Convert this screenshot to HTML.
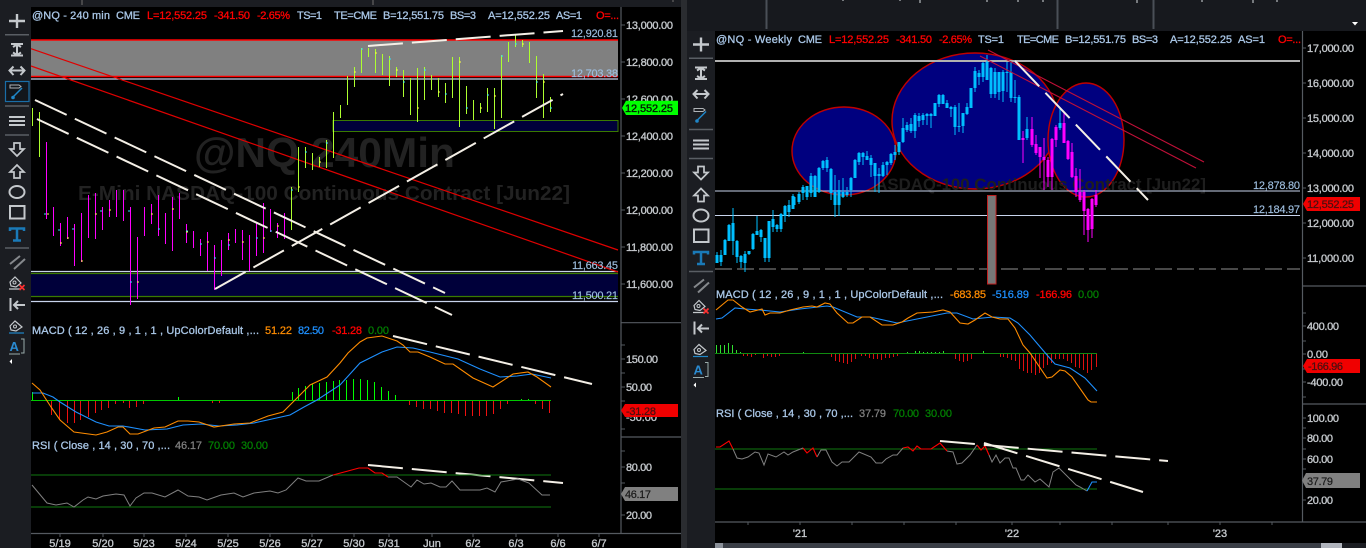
<!DOCTYPE html>
<html><head><meta charset="utf-8"><title>Charts</title>
<style>
html,body{margin:0;padding:0;background:#000;width:1366px;height:548px;overflow:hidden}
svg{display:block;position:absolute;left:0;top:0}
text{font-family:"Liberation Sans",sans-serif;font-size:11px;white-space:pre}
.h{fill:#a9c6e6;stroke:#a9c6e6;stroke-width:.3}
.r{fill:#ff0000;stroke:#ff0000;stroke-width:.3}
.o{fill:#ff8c00;stroke:#ff8c00;stroke-width:.25}.b{fill:#1e90ff;stroke:#1e90ff;stroke-width:.25}.g{fill:#008000;stroke:#008000;stroke-width:.25}.y{fill:#808080;stroke:#808080;stroke-width:.25}
.a{fill:#c4c8cc;stroke:#c4c8cc;stroke-width:.35}
.l{fill:#9fbfe0;stroke:#9fbfe0;stroke-width:.15}
.t{fill:#4a1010;stroke:#4a1010;stroke-width:.25}
.w{fill:none;stroke:#f4efe6;stroke-width:2;stroke-dasharray:35 9}
.i{fill:none;stroke:#c4c8cc;stroke-width:2}
.c{shape-rendering:crispEdges}
</style></head><body>
<svg width="1366" height="548" viewBox="0 0 1366 548" xmlns="http://www.w3.org/2000/svg">
<defs>
<g id="tb">
<path class="i" style="stroke-width:2.4" d="M17 14V28M9 21H25"/>
<path d="M5 34.7H29M5 106H29M5 135H29M5 248H29" stroke="#5a5e64" stroke-width="1.5" fill="none"/>
<path class="i" d="M11 44H23M11 55.5H23M17 44V55.5M13 47L17 44.5L21 47M13 52.5L17 55L21 52.5"/>
<path class="i" d="M10 70.5H24M13.5 66.5L9.5 70.5L13.5 75M20.5 66.5L24.5 70.5L20.5 75"/>
<path d="M10 85H19L21 86.5L19 88H10Z" fill="none" stroke="#b0b4b8"/>
<path d="M13 97L22 88" stroke="#1f86c8" stroke-width="1.5"/><circle cx="13" cy="97.5" r="1.8" fill="#1f86c8"/>
<path class="i" style="stroke-width:2" d="M9 117H25M9 121H25M9 125H25"/>
<path class="i" style="stroke-width:1.7" d="M14 143H20V149H24L17 156L10 149H14Z"/>
<path class="i" style="stroke-width:1.7" d="M17 165L24 172H20V178H14V172H10Z"/>
<ellipse class="i" style="stroke-width:2" cx="17" cy="192" rx="7.5" ry="6"/>
<rect class="i" style="stroke-width:2" x="10" y="206" width="14.5" height="12.5"/>
<path d="M10 231V228.5H24V231M17 228.5V240M13 240.5H21" fill="none" stroke="#1a7ab8" stroke-width="2.5"/>
<path d="M10 264L20 256M14 269L25 259" fill="none" stroke="#85888c" stroke-width="2"/>
<path class="i" style="stroke-width:1.2" d="M11 286L10 282L15 277L21 283L16 287ZM9 289H20"/>
<circle cx="14.5" cy="282.5" r="1.5" fill="none" stroke="#c4c8cc"/>
<path d="M19.5 285L24.5 290M24.5 285L19.5 290" stroke="#ff3030" stroke-width="1.6"/>
<path class="i" d="M10.5 298V311M14 305H25M18 301L14 305L18 309"/>
<path class="i" style="stroke-width:1.2" d="M11 330L10 326L15 321L22 327L16 331Z"/>
<circle cx="15" cy="326.5" r="1.5" fill="none" stroke="#c4c8cc"/>
<path d="M9 333H24" stroke="#1f86c8" stroke-width="1.2"/>
<text x="9.5" y="351" style="font-size:13px;font-weight:bold;fill:#2a8ad0">A</text>
<path d="M21 339H24V353H21M9 354H20" fill="none" stroke="#9aa" stroke-width="1"/>
<path d="M9.5 361.5L12 359V364Z" fill="#fff"/>
</g>
</defs>

<!-- chrome -->
<rect width="1366" height="548" fill="#000"/>
<rect x="0" y="0" width="31" height="548" fill="#1b1d22"/>
<rect x="0" y="0" width="690" height="7" fill="#1b1d22"/>
<rect x="681" y="0" width="6" height="548" fill="#2a2c30"/>
<rect x="687" y="0" width="28" height="548" fill="#1b1d22"/>
<rect x="687" y="0" width="679" height="31" fill="#17191e"/>
<path d="M82 0V5M373 0V5M673 0V2" stroke="#555" stroke-width="1.5"/>
<path d="M766.5 0V29M1057.5 0V29M1153.5 0V29" stroke="#4a4f57" stroke-width="2"/>
<path d="M843 0V1M900 0V1M920 0V3M987 0V2M1018 0V2M1043 0V2M1137 0V3M1202 0V2M1253 0V3M1277 0V2" stroke="#a0a4a8" stroke-width="1.4"/>
<path d="M1352 22H1358L1355 25.5Z" fill="#fff"/>

<!-- LEFT CHART -->
<text x="194" y="167" textLength="261" lengthAdjust="spacingAndGlyphs" style="font-size:42px;font-weight:bold;fill:#222">@NQ 240Min</text>
<text x="78" y="200" textLength="492" lengthAdjust="spacingAndGlyphs" style="font-size:20px;font-weight:bold;fill:#222">E-Mini NASDAQ-100 Continuous Contract [Jun22]</text>
<rect x="31" y="40" width="587" height="36.5" fill="#808080"/>
<rect x="333" y="120.5" width="285" height="11" fill="#00003a" stroke="#3a7a00"/>
<rect x="31" y="273.5" width="587" height="23" fill="#00003a"/>
<path d="M31 273.5H618M31 296.5H618" stroke="#3a7a00" stroke-width="1.3"/>
<path d="M31 40H618M31 76.5H618" stroke="#ff0000" stroke-width="1.6"/>
<path d="M31 79H618M31 271.5H618M31 301.5H618" stroke="#c8d4ec" stroke-width="1.2"/>
<path d="M31 48.7L618 250M31 66L618 272" stroke="#e00000" stroke-width="1.2" fill="none"/>

<path class="c" fill="none" stroke="#adff2f" stroke-width="1" d="M32.5 108V126M39.5 112V157M291.5 187V230M298.5 147V192M305.5 147V168M312.5 153V170M319.5 157V167M326.5 140V168M333.5 112V158M340.5 105V118M347.5 76V105M354.5 67V87M361.5 48V73M368.5 48V57M375.5 49V73M382.5 54V75M389.5 56V86M396.5 67V77M403.5 70V97M410.5 78V115M417.5 68V122M424.5 67V100M431.5 75V90M438.5 78V97M445.5 83V103M452.5 57V98M459.5 57V127M466.5 86V114M473.5 100V120M480.5 103V113M487.5 88V112M494.5 88V129M501.5 55V118M508.5 42V62M515.5 34V47M522.5 40V47M529.5 42V63M536.5 56V98M543.5 74V118M550.5 97V112"/>
<path class="c" fill="none" stroke="#ff00ff" stroke-width="1" d="M46.5 142V219M53.5 207V236M60.5 223V246M67.5 217V239M74.5 224V266M81.5 213V262M88.5 195V238M95.5 193V239M102.5 207V230M109.5 200V217M116.5 190V217M123.5 190V221M130.5 207V305M137.5 237V299M144.5 207V236M151.5 204V224M158.5 195V236M165.5 213V244M172.5 197V251M179.5 193V219M186.5 224V243M193.5 231V248M200.5 239V256M207.5 232V271M214.5 245V290M221.5 240V276M228.5 233V250M235.5 229V243M242.5 230V260M249.5 235V271M256.5 223V256M263.5 203V253M270.5 209V232M277.5 223V238M284.5 213V239"/>
<path class="c" fill="none" stroke="#ffff40" stroke-width="1" d="M47 214h2M60 243h2M67 238h2M81 261h2M95 214h2M109 210h2M137 282h2M151 214h2M172 209h2M186 232h2M207 242h2M228 240h2M242 242h2M263 238h2M277 226h2M298 187h2M319 162h2M354 72h2M375 53h2M396 70h2M417 108h2M438 92h2M459 62h2M480 108h2M494 96h2M522 44h2M543 82h2"/>
<path class="c" fill="none" stroke="#30e0ff" stroke-width="1" d="M44 214h2M58 230h2M72 229h2M100 211h2M128 211h2M130 282h2M158 229h2M186 231h2M200 244h2M214 258h2M228 245h2M256 238h2M270 231h2M291 190h2M305 152h2M326 143h2M361 49h2M389 59h2M403 82h2M424 70h2M445 94h2M466 108h2M487 95h2M501 56h2M515 44h2M536 82h2M550 108h2"/>

<path class="w" d="M35 100L445 293"/>
<path class="w" d="M37 119L452 315"/>
<path class="w" d="M215 289L563 94"/>
<path class="w" d="M368 46L563 31"/>
<path class="w" d="M393 336L592 384"/>
<path class="w" d="M368 465L563 483"/>

<text x="32" y="19" class="h" textLength="78">@NQ - 240 min</text>
<text x="116" y="19" class="h" textLength="24">CME</text>
<text x="147" y="19" class="r" textLength="60">L=12,552.25</text>
<text x="214" y="19" class="r" textLength="36">-341.50</text>
<text x="257" y="19" class="r" textLength="33">-2.65%</text>
<text x="297" y="19" class="h" textLength="25">TS=1</text>
<text x="334" y="19" class="h" textLength="43">TE=CME</text>
<text x="383" y="19" class="h" textLength="61">B=12,551.75</text>
<text x="450" y="19" class="h" textLength="26">BS=3</text>
<text x="488" y="19" class="h" textLength="62">A=12,552.25</text>
<text x="556" y="19" class="h" textLength="26">AS=1</text>
<text x="596" y="19" class="r" textLength="23">O=...</text>
<text x="571" y="37" class="l" textLength="47">12,920.81</text>
<text x="571" y="77" class="l" textLength="47">12,703.38</text>
<text x="572" y="269" class="l" textLength="46">11,663.45</text>
<text x="572" y="299" class="l" textLength="46">11,500.21</text>

<!-- left MACD -->
<text x="32" y="334" class="h" textLength="227">MACD ( 12 , 26 , 9 , 1 , 1 , UpColorDefault ,...</text>
<text x="265" y="334" class="o" textLength="27">51.22</text>
<text x="298" y="334" class="b" textLength="26">82.50</text>
<text x="332" y="334" class="r" textLength="30">-31.28</text>
<text x="368" y="334" class="g" textLength="21">0.00</text>
<path class="c" fill="none" stroke="#00ff00" stroke-width="1" d="M32.5 392V401M178.5 397V401M292.5 392V401M298.5 388V401M305.5 386V401M312.5 384V401M319.5 383V401M326.5 382V401M333.5 381V401M339.5 380V401M346.5 380V401M353.5 379V401M360.5 379V401M367.5 380V401M374.5 382V401M381.5 387V401M388.5 391V401M395.5 395V401M521.5 399V401M528.5 399V401"/>
<path class="c" fill="none" stroke="#f01010" stroke-width="1" d="M51.5 401V415M59.5 401V420M67.5 401V423M74.5 401V423M80.5 401V420M88.5 401V417M95.5 401V413M101.5 401V410M108.5 401V408M115.5 401V404M123.5 401V403M129.5 401V408M136.5 401V407M143.5 401V404M212.5 401V403M219.5 401V403M409.5 401V405M416.5 401V407M423.5 401V409M430.5 401V409M437.5 401V411M444.5 401V413M451.5 401V413M458.5 401V414M465.5 401V416M472.5 401V416M479.5 401V416M486.5 401V416M493.5 401V414M500.5 401V409M507.5 401V404M535.5 401V404M542.5 401V409M549.5 401V413"/>
<path class="c" d="M31 400.5H551" stroke="#00c800" stroke-width="1"/>
<path fill="none" stroke="#1e90ff" stroke-width="1.1" d="M32 393L43 393L53 397L60 402L76 412L96 422L109 426L123 426L145 430L167 429L183 425L201 424L219 426L237 425L254 423L272 419L290 415L304 407L317 400L340 385L360 363L382 352L397 347L413 348L430 352L458 359L480 369L500 377L517 376L532 374L551 378"/>
<path fill="none" stroke="#ff8c00" stroke-width="1.1" d="M32 383L40 390L51 407L60 420L74 432L96 435L107 432L118 427L123 427L130 434L138 434L154 428L165 427L178 421L188 421L199 422L214 427L234 424L250 423L268 416L283 412L290 405L295 400L310 385L327 377L340 363L348 353L360 342L367 338L382 336L397 341L403 345L410 352L418 352L430 357L445 364L453 364L473 378L493 387L513 374L528 372L537 377L551 387"/>

<!-- left RSI -->
<text x="32" y="449" class="h" textLength="138">RSI ( Close , 14 , 30 , 70 ,...</text>
<text x="175" y="449" class="y" textLength="27">46.17</text>
<text x="208" y="449" class="g" textLength="27">70.00</text>
<text x="241" y="449" class="g" textLength="27">30.00</text>
<path d="M31 475H551M31 507H551" stroke="#117711" stroke-width="1.1"/>
<path fill="none" stroke="#808080" d="M32 485L47 503L56 505L67 503L74 507L83 500L88 497L96 499L103 496L116 494L124 495L130 506L136 498L144 493L152 493L165 497L178 490L188 496L199 497L207 500L221 495L234 493L243 497L254 493L270 491L278 493L286 490L298 478L306 481L319 481L333 475M388 477L397 477L411 487L417 480L424 484L431 483L440 487L446 487L452 481L460 490L480 490L487 488L495 492L501 482L518 479L529 483L542 495L550 495"/>
<path fill="none" stroke="#ff0000" stroke-width="1.1" d="M333 475L348 471L359 468L368 468L375 473L382 473L388 477"/>

<!-- left axis -->
<path d="M621 7V533M621 322.7H681M621 437H681M31 533.5H681" stroke="#555a60" stroke-width="1.2"/>
<path d="M621 25H625M621 62H625M621 99H625M621 136H625M621 173H625M621 210H625M621 247H625M621 284H625M621 345H625M621 359H625M621 373H625M621 387H625M621 401H625M621 429H625M621 451H625M621 467H625M621 483H625M621 515H625M60 533V537M103 533V537M144 533V537M186 533V537M228 533V537M270 533V537M312 533V537M354 533V537M389 533V537M432 533V537M473 533V537M516 533V537M558 533V537M599 533V537" stroke="#555a60"/>
<g class="a">
<text x="626" y="29" textLength="47">13,000.00</text>
<text x="626" y="66" textLength="47">12,800.00</text>
<text x="626" y="103" textLength="47">12,600.00</text>
<text x="626" y="140" textLength="47">12,400.00</text>
<text x="626" y="177" textLength="47">12,200.00</text>
<text x="626" y="214" textLength="47">12,000.00</text>
<text x="626" y="251" textLength="47">11,800.00</text>
<text x="626" y="288" textLength="47">11,600.00</text>
<text x="626" y="363" textLength="32">150.00</text>
<text x="626" y="391" textLength="26">50.00</text>
<text x="626" y="421" textLength="31">-50.00</text>
<text x="626" y="471" textLength="26">80.00</text>
<text x="626" y="519" textLength="26">20.00</text>
</g>
<path d="M622 108L626 100.7H678V115H626Z" fill="#00ff00"/>
<text x="625" y="112" textLength="48" style="fill:#041804;stroke:#041804;stroke-width:.35">12,552.25</text>
<path d="M621 410.5L625 404H678V417H625Z" fill="#f00000"/>
<text x="626" y="415" class="t" textLength="30">-31.28</text>
<path d="M621 494L625 487H678V501H625Z" fill="#808080"/>
<text x="625" y="498" textLength="26" style="fill:#1a1a1a;stroke:#1a1a1a;stroke-width:.2">46.17</text>
<g class="a" text-anchor="middle">
<text x="60" y="547">5/19</text><text x="103" y="547">5/20</text><text x="144" y="547">5/23</text><text x="186" y="547">5/24</text><text x="228" y="547">5/25</text><text x="270" y="547">5/26</text><text x="312" y="547">5/27</text><text x="354" y="547">5/30</text><text x="389" y="547">5/31</text><text x="432" y="547">Jun</text><text x="473" y="547">6/2</text><text x="516" y="547">6/3</text><text x="558" y="547">6/6</text><text x="599" y="547">6/7</text>
</g>

<!-- RIGHT CHART -->
<ellipse cx="975" cy="121" rx="83" ry="68" fill="#00007f" stroke="#c00000" stroke-width="1.4"/>
<ellipse cx="1086" cy="140" rx="38" ry="57" fill="#00007f" stroke="#c00000" stroke-width="1.4"/>
<text x="808" y="190" textLength="398" lengthAdjust="spacingAndGlyphs" style="font-size:17px;font-weight:bold;fill:#1e1e1e">E-Mini NASDAQ-100 Continuous Contract [Jun22]</text>
<ellipse cx="844" cy="151" rx="52" ry="44" fill="#00007f" stroke="#c00000" stroke-width="1.4"/>
<path d="M715 61H1300" stroke="#b0b0b0" stroke-width="2"/>
<path d="M715 191H1300M715 215.5H1300" stroke="#c8d4ec" stroke-width="1.1"/>
<path d="M715 269H1300" stroke="#484848" stroke-width="2" stroke-dasharray="17 5"/>
<rect x="987.5" y="195.5" width="8.5" height="88.5" fill="#777" stroke="#c02020"/>

<path class="c" fill="none" stroke="#00bfff" stroke-width="1" d="M717 252V263M721 250V266M725 239V255M729 224V241M733 208V255M737 240V263M741 255V268M745 251V272M749 251V255M753 233V250M757 216V235M761 229V242M765 238V262M769 221V262M773 210V232M777 224V232M781 213V232M785 205V222M789 200V217M793 194V209M795 197V205M799 192V204M803 185V200M807 186V200M811 173V197M815 175V193M819 167V193M823 160V170M827 157V172M831 168V200M835 175V217M839 180V216M843 178V198M847 187V197M851 177V197M855 159V178M859 152V165M863 152V165M867 151V160M871 155V177M875 163V192M879 168V193M883 162V177M887 161V175M891 153V165M895 145V160M899 142V155M903 118V143M907 122V132M911 118V133M915 113V138M919 113V127M923 113V125M927 113V125M931 113V128M935 103V116M939 94V107M943 94V104M947 100V108M951 106V117M955 105V135M959 103V132M963 113V133M967 103V115M971 88V108M975 67V92M979 70V85M983 62V82M987 55V80M991 67V98M995 68V98M999 72V100M1003 70V102M1007 62V92M1011 62V102M1015 80V103M1019 95V140M1027 117V140M1060 108V130"/>
<path class="c" fill="none" stroke="#00bfff" stroke-width="3" d="M717 255V263M721 255V262M725 240V255M729 225V241M733 223V241M737 241V257M741 256V262M745 254V263M749 251V254M753 234V249M757 231V235M761 230V237M765 238V258M769 221V258M773 219V227M777 225V229M781 214V229M785 206V216M789 205V212M793 196V209M799 194V202M803 187V193M807 186V197M811 176V193M815 176V197M819 168V192M823 161V168M827 160V168M831 169V193M835 192V205M839 190V205M843 192V197M847 192V195M851 178V190M855 160V178M859 153V162M863 153V157M867 156V160M871 158V165M875 163V176M879 174V176M883 165V176M887 162V165M891 154V163M895 152V155M899 142V152M903 128V142M907 125V130M911 124V131M915 115V131M919 116V121M923 115V120M927 114V116M931 114V116M935 103V116M939 95V104M943 95V104M947 103V108M951 107V109M955 107V127M959 126V127M963 113V126M967 107V114M971 88V108M975 71V88M979 73V77M983 63V77M987 62V80M991 68V94M995 72V94M999 72V92M1003 72V91M1007 72V73M1011 72V98M1015 97V98M1019 97V140M1027 129V138M1060 123V128"/>
<path class="c" fill="none" stroke="#ff00ff" stroke-width="1" d="M1023 131V163M1032 117V147M1036 135V155M1040 147V178M1044 138V190M1048 157V187M1052 138V190M1056 125V147M1064 113V143M1068 140V160M1072 143V178M1076 168V197M1080 169V202M1084 190V235M1088 208V242M1092 198V238M1096 190V207"/>
<path class="c" fill="none" stroke="#ff00ff" stroke-width="3" d="M1023 138V140M1032 129V145M1036 144V153M1040 147V157M1044 157V160M1048 160V177M1052 139V177M1056 127V140M1064 123V143M1068 141V159M1072 152V177M1076 176V192M1080 192V200M1084 192V211M1088 209V230M1092 199V229M1096 195V205"/>

<path d="M988 50L1204 162M980 56L1196 168" stroke="#c01038" stroke-width="1.1" fill="none"/>
<path class="w" d="M1015 61L1148 200"/>

<text x="716" y="43" class="h" textLength="76">@NQ - Weekly</text>
<text x="798" y="43" class="h" textLength="24">CME</text>
<text x="829" y="43" class="r" textLength="60">L=12,552.25</text>
<text x="896" y="43" class="r" textLength="36">-341.50</text>
<text x="939" y="43" class="r" textLength="33">-2.65%</text>
<text x="978" y="43" class="h" textLength="26">TS=1</text>
<text x="1017" y="43" class="h" textLength="42">TE=CME</text>
<text x="1065" y="43" class="h" textLength="61">B=12,551.75</text>
<text x="1132" y="43" class="h" textLength="26">BS=3</text>
<text x="1170" y="43" class="h" textLength="62">A=12,552.25</text>
<text x="1238" y="43" class="h" textLength="27">AS=1</text>
<text x="1278" y="43" class="r" textLength="23">O=...</text>
<text x="1253" y="189" class="l" textLength="47">12,878.80</text>
<text x="1253" y="213" class="l" textLength="47">12,184.97</text>

<!-- right MACD -->
<text x="716" y="298" class="h" textLength="227">MACD ( 12 , 26 , 9 , 1 , 1 , UpColorDefault ,...</text>
<text x="950" y="298" class="o" textLength="36">-683.85</text>
<text x="992" y="298" class="b" textLength="37">-516.89</text>
<text x="1036" y="298" class="r" textLength="36">-166.96</text>
<text x="1078" y="298" class="g" textLength="21">0.00</text>
<path class="c" fill="none" stroke="#30e030" stroke-width="1" d="M716.5 345V354M720.5 345V354M724.5 345V354M728.5 343V354M732.5 345V354M736.5 350V354M740.5 352V354M783.5 353V354M787.5 353V354M791.5 353V354M795.5 353V354M799.5 353V354M803.5 352V354M807.5 353V354M811.5 353V354M815.5 353V354M819.5 353V354M823.5 353V354M827.5 353V354M907.5 352V354M911.5 353V354M915.5 351V354M919.5 351V354M923.5 352V354M927.5 352V354M931.5 352V354M935.5 352V354M939.5 352V354M943.5 351V354M947.5 353V354M975.5 353V354M979.5 353V354M983.5 351V354"/>
<path class="c" fill="none" stroke="#e01010" stroke-width="1" d="M743.5 354V356M747.5 354V356M751.5 354V357M755.5 354V355M763.5 354V358M767.5 354V356M771.5 354V357M775.5 354V357M779.5 354V356M831.5 354V357M835.5 354V361M839.5 354V362M843.5 354V363M847.5 354V364M851.5 354V362M855.5 354V359M861.5 354V356M865.5 354V356M869.5 354V358M873.5 354V359M877.5 354V359M881.5 354V360M885.5 354V358M889.5 354V358M893.5 354V357M897.5 354V356M955.5 354V359M959.5 354V361M963.5 354V362M967.5 354V361M971.5 354V359M1000.5 354V357M1003.5 354V357M1007.5 354V358M1011.5 354V360M1015.5 354V361M1019.5 354V369M1023.5 354V371M1027.5 354V373M1031.5 354V373M1035.5 354V375M1039.5 354V373M1043.5 354V368M1047.5 354V365M1051.5 354V363M1055.5 354V359M1059.5 354V359M1063.5 354V359M1067.5 354V361M1071.5 354V363M1075.5 354V367M1079.5 354V368M1083.5 354V370M1087.5 354V373M1091.5 354V370M1096.5 354V367"/>
<path class="c" d="M715 353.5H1097" stroke="#108a10" stroke-width="1"/>
<path fill="none" stroke="#1e90ff" stroke-width="1.1" d="M716 319L722 318L735 308L745 309L760 310L780 312L800 309L827 306L833 307L857 317L870 317L897 323L947 313L957 313L973 319L993 317L1010 318L1018 323L1030 335L1047 355L1055 364L1070 368L1085 378L1097 391"/>
<path fill="none" stroke="#ff8c00" stroke-width="1.1" d="M716 310L728 300L733 300L742 307L750 312L762 309L765 315L770 313L780 313L790 310L803 307L812 306L817 307L825 303L830 304L837 313L848 323L853 323L862 317L870 317L882 325L893 325L902 322L908 318L917 313L933 312L943 310L950 312L960 323L968 324L975 320L985 313L992 317L1000 319L1008 319L1015 328L1023 345L1030 353L1047 378L1052 377L1060 370L1065 371L1072 377L1088 400L1091 402H1097"/>

<!-- right RSI -->
<text x="716" y="417" class="h" textLength="137">RSI ( Close , 14 , 30 , 70 ,...</text>
<text x="859" y="417" class="y" textLength="27">37.79</text>
<text x="893" y="417" class="g" textLength="26">70.00</text>
<text x="925" y="417" class="g" textLength="27">30.00</text>
<path d="M715 449H1097M715 489H1097" stroke="#117711" stroke-width="1.1"/>
<path fill="none" stroke="#808080" d="M733 449L737 458L742 459L748 457L755 452L759 453L764 465L768 454L776 457L784 452L788 455L793 452L803 448M817 457L821 450L826 450L832 462L837 466L842 462L849 462L859 452L871 457L876 463L882 463L886 459L893 455L897 455L903 448M947 451L953 452L957 464L962 463L970 455L977 445M989 455L992 462L996 455L1000 463L1005 458L1009 458L1013 468L1016 468L1021 480L1024 480L1028 475L1035 482L1040 479L1049 487L1053 472L1059 468L1076 485L1080 487L1087 491"/>
<path fill="none" stroke="#ff0000" stroke-width="1.1" d="M716 447L720 447L729 441L733 449M803 448L807 453L813 448L817 457M903 448L908 447L913 451L917 446L921 449L931 449L940 443L947 451M977 445L981 450L985 446L989 455"/>
<path fill="none" stroke="#1e90ff" stroke-width="1.1" d="M1087 491L1092 482L1097 482"/>
<path class="w" d="M940 441L1168 461"/>
<path class="w" d="M984 443L1143 492"/>

<!-- right axis -->
<path d="M1302.5 31V522M1302 286H1366M1302 404H1366M715 522H1366" stroke="#555a60" stroke-width="1.2"/>
<path d="M1302 48H1306M1302 83H1306M1302 118H1306M1302 153H1306M1302 188H1306M1302 223H1306M1302 258H1306M1302 313H1306M1302 326H1306M1302 341H1306M1302 354H1306M1302 369H1306M1302 382H1306M1302 397H1306M1302 418H1306M1302 428H1306M1302 438H1306M1302 449H1306M1302 459H1306M1302 469H1306M1302 500H1306M748 522V525M800 522V525M852 522V525M904 522V525M956 522V525M1012 522V525M1060 522V525M1112 522V525M1168 522V525M1220 522V525M1272 522V525" stroke="#555a60"/>
<g class="a">
<text x="1307" y="52" textLength="47">17,000.00</text>
<text x="1307" y="87" textLength="47">16,000.00</text>
<text x="1307" y="122" textLength="47">15,000.00</text>
<text x="1307" y="157" textLength="47">14,000.00</text>
<text x="1307" y="192" textLength="47">13,000.00</text>
<text x="1307" y="227" textLength="47">12,000.00</text>
<text x="1307" y="262" textLength="47">11,000.00</text>
<text x="1307" y="330" textLength="32">400.00</text>
<text x="1307" y="358" textLength="21">0.00</text>
<text x="1307" y="386" textLength="36">-400.00</text>
<text x="1307" y="422" textLength="32">100.00</text>
<text x="1307" y="442" textLength="26">80.00</text>
<text x="1307" y="463" textLength="26">60.00</text>
<text x="1307" y="504" textLength="26">20.00</text>
</g>
<path d="M1303 204L1307 197H1360V211H1307Z" fill="#f00000"/>
<text x="1307" y="208" class="t" textLength="47">12,552.25</text>
<path d="M1303 366L1307 359H1360V373H1307Z" fill="#f00000"/>
<text x="1308" y="370" class="t" textLength="35">-166.96</text>
<path d="M1302 480.5L1306 473H1360V488H1306Z" fill="#808080"/>
<text x="1307" y="485" textLength="26" style="fill:#1a1a1a;stroke:#1a1a1a;stroke-width:.2">37.79</text>
<g class="a" text-anchor="middle">
<text x="800" y="537">'21</text><text x="1012" y="537">'22</text><text x="1220" y="537">'23</text>
</g>
<rect x="715" y="543" width="651" height="5" fill="#1b1d22"/>
<rect x="715" y="543" width="8" height="5" fill="#8a9099"/>
<rect x="723" y="543" width="598" height="5" fill="#3a3e46"/>
<rect x="1321" y="543" width="21" height="5" fill="#b0b4bc"/>

<!-- toolbars -->
<rect x="5.5" y="81.5" width="23.5" height="20" fill="#12161c" stroke="#1a6ea8" stroke-width="1.2"/>
<use href="#tb"/>
<use href="#tb" transform="translate(684,23.5)"/>
</svg>
</body></html>
